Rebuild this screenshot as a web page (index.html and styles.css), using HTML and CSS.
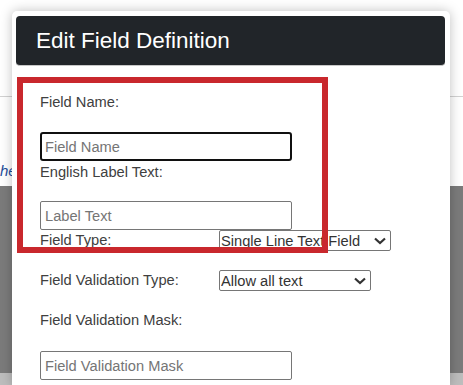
FILE: index.html
```html
<!DOCTYPE html>
<html>
<head>
    <title>Edit Field Definition</title>
    <link rel="stylesheet" href="styles.css">
</head>
<body>
    <div class="page">
        <div class="page-top"></div>
        <div class="page-text">he</div>
        <div class="page-panel"></div>
        <div class="page-footer"></div>
    </div>

    <div class="dialog">
        <div class="dialog-header">
            <h2>Edit Field Definition</h2>
        </div>
        <div class="dialog-body">
            <div class="field-label">Field Name:</div>
            <input type="text" class="text-input focused" placeholder="Field Name">

            <div class="field-label after-input">English Label Text:</div>
            <input type="text" class="text-input" placeholder="Label Text">

            <div class="field-row">
                <span class="row-label">Field Type:</span>
                <div class="select-wrap">
                    <select class="field-select type-select">
                        <option>Single Line Text Field</option>
                    </select>
                    <svg class="chevron" width="12" height="8" viewBox="0 0 12 8"><path d="M1 1.5 L6 6 L11 1.5" fill="none" stroke="#333" stroke-width="2.2"/></svg>
                </div>
            </div>

            <div class="field-row second">
                <span class="row-label">Field Validation Type:</span>
                <div class="select-wrap">
                    <select class="field-select validation-select">
                        <option>Allow all text</option>
                    </select>
                    <svg class="chevron" width="12" height="8" viewBox="0 0 12 8"><path d="M1 1.5 L6 6 L11 1.5" fill="none" stroke="#333" stroke-width="2.2"/></svg>
                </div>
            </div>

            <div class="field-label mask-label">Field Validation Mask:</div>
            <input type="text" class="text-input" placeholder="Field Validation Mask">
        </div>
        <div class="highlight-box"></div>
    </div>
</body>
</html>
```

FILE: styles.css
```css
body {
    font-family: "Liberation Sans", Arial, sans-serif;
    background-color: #ffffff;
    margin: 0;
    padding: 0;
    overflow: hidden;
}
.page {
    height: 385px;
    overflow: hidden;
}
.page-top {
    height: 96px;
    border-bottom: 1px solid #d2d2d2;
}
.page-text {
    margin-top: 65px;
    height: 24px;
    font-size: 15px;
    line-height: 17px;
    font-style: italic;
    color: #1f4e9a;
}
.page-panel {
    height: 187px;
    background-color: #7b7b7b;
}
.page-footer {
    height: 12px;
    background-color: #bdbdbd;
}
.dialog {
    position: absolute;
    left: 12px;
    top: 11px;
    width: 438px;
    height: 374px;
    background: #ffffff;
    border-radius: 5px 5px 0 0;
    box-shadow: 0 0 12px rgba(0, 0, 0, 0.25);
}
.dialog-header {
    margin: 5px 5px 0 4px;
    height: 50px;
    box-sizing: border-box;
    padding: 12px 20px;
    background: #212529;
    border-radius: 4px;
    border-bottom: 1px solid #c8c8c8;
}
.dialog-header h2 {
    margin: 0;
    font-size: 22.5px;
    line-height: 26px;
    font-weight: normal;
    color: #ffffff;
}
.dialog-body {
    padding: 28px 24px 0 28px;
    font-size: 14.67px;
    line-height: 17px;
    color: #404040;
}
.field-label {
    margin-bottom: 21px;
}
.field-label.after-input {
    margin-top: 3px;
    margin-bottom: 20px;
}
.field-label.mask-label {
    margin-top: 21px;
    margin-bottom: 22px;
}
.text-input {
    display: block;
    box-sizing: border-box;
    width: 252px;
    height: 29px;
    margin: 0;
    padding: 0 4px;
    font-family: "Liberation Sans", Arial, sans-serif;
    font-size: 14.67px;
    color: #333;
    border: 1px solid #767676;
    border-radius: 2px;
    outline: none;
}
.text-input::placeholder {
    color: #757575;
}
.text-input.focused {
    border: 2px solid #101010;
    border-radius: 3px;
    padding: 0 3px;
}
.field-row {
    display: flex;
    align-items: center;
    height: 21px;
}
.field-row.second {
    margin-top: 19px;
}
.row-label {
    width: 179px;
}
.select-wrap {
    position: relative;
    height: 21px;
}
.field-select {
    appearance: none;
    -webkit-appearance: none;
    box-sizing: border-box;
    height: 21px;
    margin: 0;
    padding: 0 0 0 1px;
    font-family: "Liberation Sans", Arial, sans-serif;
    font-size: 14.67px;
    color: #333;
    background: #ffffff;
    border: 1px solid #767676;
    border-radius: 2px;
}
.type-select {
    width: 172px;
}
.validation-select {
    width: 152px;
}
.chevron {
    position: absolute;
    right: 5px;
    top: 7px;
}
.highlight-box {
    position: absolute;
    left: 5px;
    top: 66px;
    width: 299px;
    height: 164px;
    border: 6px solid #c9282d;
}
```
